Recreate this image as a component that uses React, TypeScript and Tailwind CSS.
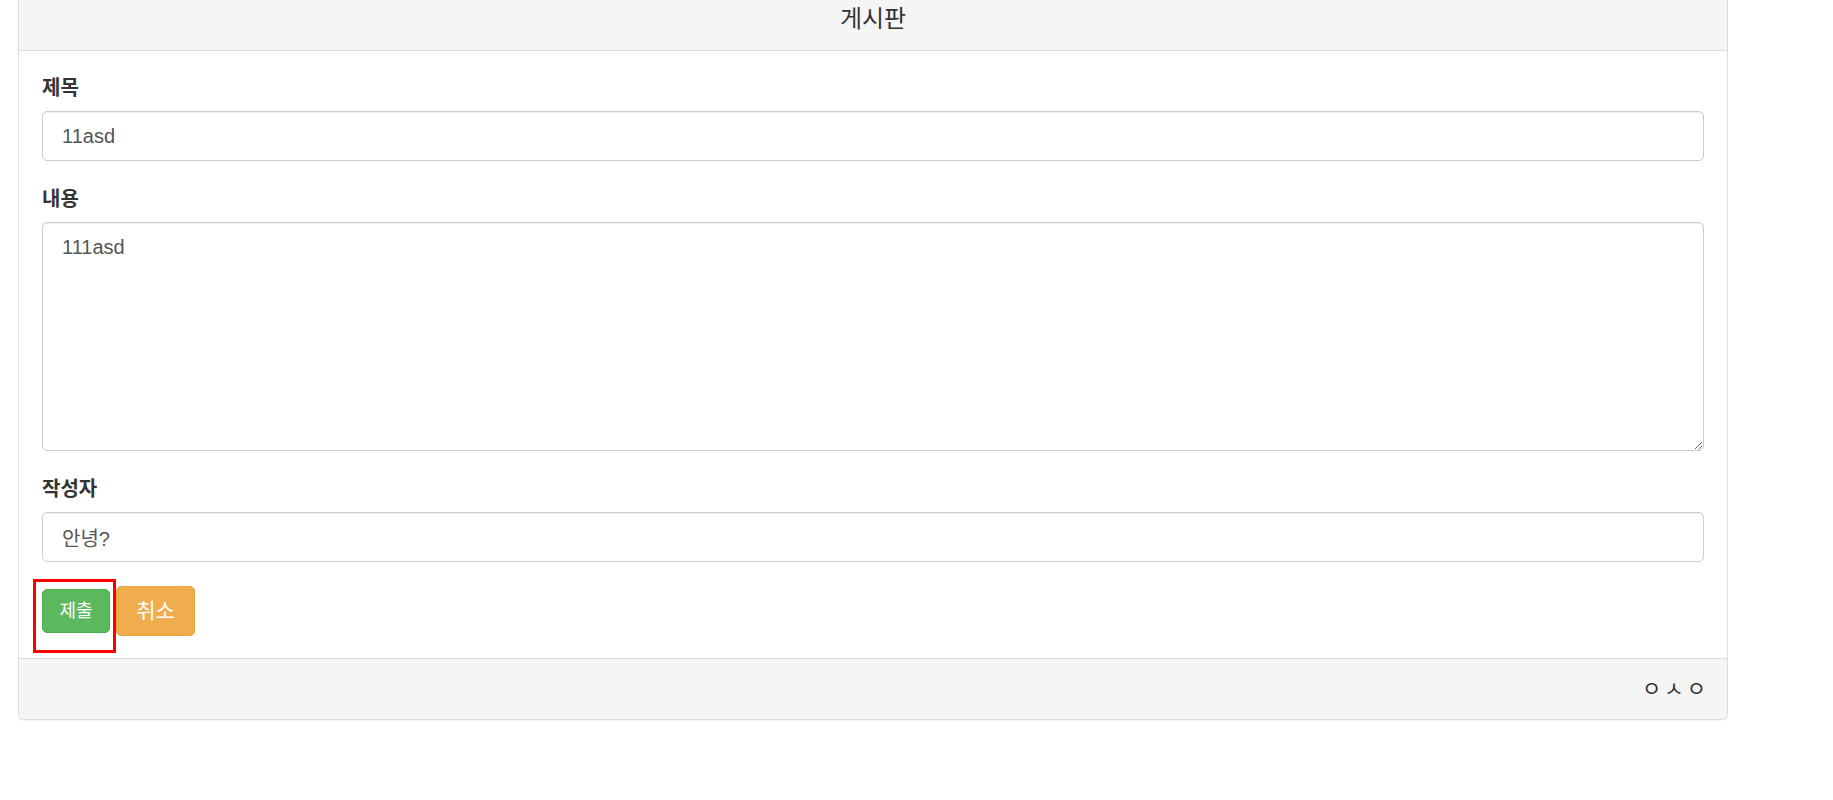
export default function App() {
  return (
    <div className="min-h-[800px] bg-white font-['Liberation_Sans','Noto_Sans_CJK_KR',sans-serif] text-[#333]">
      <div className="ml-[18px] w-[1710px] rounded-b-[6px] border border-t-0 border-[#ddd] bg-white shadow-[0_1px_1px_rgba(0,0,0,0.05)]">
        <div className="h-[51px] border-b border-[#ddd] bg-[#f5f5f5] pt-[7px] text-center text-[24px] leading-[24px] text-[#333]">
          게시판
        </div>

        <form className="px-[23px] pt-[23px] pb-[22px]" onSubmit={(e) => e.preventDefault()}>
          <div className="mb-[24px]">
            <label className="mb-[9px] block text-[20px] font-bold leading-[28px]">제목</label>
            <input
              className="block h-[50px] w-full rounded-[5px] border border-[#ccc] px-[19px] py-[9px] text-[20px] leading-[30px] text-[#555] shadow-[inset_0_1px_1px_rgba(0,0,0,0.075)] outline-none"
              defaultValue="11asd"
            />
          </div>
          <div className="mb-[24px]">
            <label className="mb-[9px] block text-[20px] font-bold leading-[28px]">내용</label>
            <textarea
              className="block h-[229px] w-full rounded-[5px] border border-[#ccc] px-[19px] py-[9px] text-[20px] leading-[30px] text-[#555] shadow-[inset_0_1px_1px_rgba(0,0,0,0.075)] outline-none"
              defaultValue="111asd"
            />
          </div>
          <div className="mb-[24px]">
            <label className="mb-[9px] block text-[20px] font-bold leading-[28px]">작성자</label>
            <input
              className="block h-[50px] w-full rounded-[5px] border border-[#ccc] px-[19px] py-[9px] text-[20px] leading-[30px] text-[#555] shadow-[inset_0_1px_1px_rgba(0,0,0,0.075)] outline-none"
              defaultValue="안녕?"
            />
          </div>

          <div className="flex h-[50px] items-center gap-[6px]">
            <span className="relative">
              <button
                type="submit"
                className="flex h-[44px] w-[68px] items-center justify-center rounded-[5px] border border-[#4cae4c] bg-[#5cb85c] text-[18px] text-white"
              >
                제출
              </button>
              <span className="pointer-events-none absolute top-[-10px] right-[-6px] bottom-[-20px] left-[-9px] border-[3px] border-[#ff0000]" />
            </span>
            <button
              type="button"
              className="flex h-[50px] w-[79px] items-center justify-center rounded-[5px] border border-[#eea236] bg-[#f0ad4e] text-[21px] text-white"
            >
              취소
            </button>
          </div>
        </form>

        <div className="flex h-[61px] items-center justify-end rounded-b-[6px] border-t border-[#ddd] bg-[#f5f5f5] pr-[18px] text-[21px] tracking-[3px] text-[#333]">
          ㅇㅅㅇ
        </div>
      </div>
    </div>
  );
}
